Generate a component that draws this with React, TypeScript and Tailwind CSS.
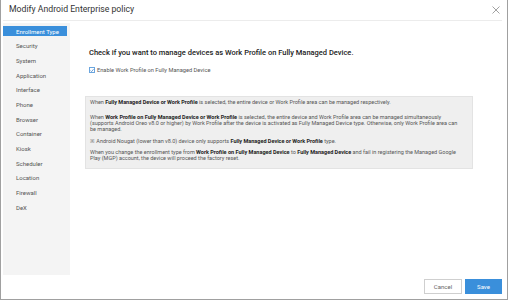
const menu = [
  "Security",
  "System",
  "Application",
  "Interface",
  "Phone",
  "Browser",
  "Container",
  "Kiosk",
  "Scheduler",
  "Location",
  "Firewall",
  "DeX",
];

export default function App() {
  return (
    <div className="w-[509px] h-[301px] bg-white font-['Roboto',sans-serif]">
      <div className="w-[508px] h-[300px] border-l border-r border-b border-[#a0a0a0] flex flex-col">
        {/* header */}
        <div className="h-[21px] ml-[2px] mr-[5px] pl-[6px] pr-[1px] flex items-center justify-between border-b border-[#ececec]">
          <span className="text-[8.7px] text-[#333]">Modify Android Enterprise policy</span>
          <svg width="8" height="8" viewBox="0 0 8 8" className="mr-[1px]">
            <path d="M0.5 0.5 L7.5 7.5 M7.5 0.5 L0.5 7.5" stroke="#8a8a8a" strokeWidth="0.8" />
          </svg>
        </div>

        <div className="flex flex-1 pl-[2px] pt-[2px]">
          {/* sidebar */}
          <div className="w-[67px] bg-[#f4f4f4] pt-px">
            <div className="h-[14.67px] flex items-center">
              <div className="w-[64px] h-[10px] bg-[#3a8fdb] text-white text-[6px] pl-[13px] flex items-center">
                Enrollment Type
              </div>
            </div>
            {menu.map((m) => (
              <div key={m} className="h-[14.67px] flex items-center pl-[13px] text-[6px] text-[#555]">
                {m}
              </div>
            ))}
          </div>

          {/* main */}
          <div className="flex-1 pl-[15px]">
            <div className="mt-[25px] pl-[4px] text-[7.5px] leading-[10px] font-medium text-[#222]">
              Check if you want to manage devices as Work Profile on Fully Managed Device.
            </div>
            <div className="mt-[8px] pl-[4px] h-[8px] flex items-center gap-[2px]">
              <div className="w-[6px] h-[6px] border border-[#6aa5de] bg-white flex items-center justify-center">
                <svg width="5" height="5" viewBox="0 0 5 5">
                  <path d="M0.6 2.6 L2 3.9 L4.5 0.8" stroke="#3a7fc8" strokeWidth="0.9" fill="none" />
                </svg>
              </div>
              <span className="text-[5.7px] text-[#555]">Enable Work Profile on Fully Managed Device</span>
            </div>

            <div className="mt-[22px] w-[388px] h-[73px] bg-[#efefef] border border-[#e3e3e3] px-[4px] pt-[2px] text-[5.5px] leading-[6px] text-[#555] whitespace-nowrap">
              <p className="mb-[9px]">
                When <b className="text-[#222]">Fully Managed Device or Work Profile</b> is selected, the entire device or Work Profile area can be managed respectively.
              </p>
              <p className="mb-[6px]">
                When <b className="text-[#222]">Work Profile on Fully Managed Device or Work Profile</b> is selected, the entire device and Work Profile area can be managed simultaneously
                <br />
                (supports Android Oreo v8.0 or higher) by Work Profile after the device is activated as Fully Managed Device type. Otherwise, only Work Profile area can
                <br />
                be managed.
              </p>
              <p className="mb-[5px]">
                ※ Android Nougat (lower than v8.0) device only supports <b className="text-[#222]">Fully Managed Device or Work Profile</b> type.
              </p>
              <p>
                When you change the enrollment type from <b className="text-[#222]">Work Profile on Fully Managed Device</b> to <b className="text-[#222]">Fully Managed Device</b> and fail in registering the Managed Google
                <br />
                Play (MGP) account, the device will proceed the factory reset.
              </p>
            </div>
          </div>
        </div>

        {/* footer */}
        <div className="h-[24px] pt-[4px] pr-[5px] flex justify-end items-start gap-[3px]">
          <button className="w-[38px] h-[15px] border border-[#cfcfcf] bg-white text-[6px] text-[#666]">Cancel</button>
          <button className="w-[37px] h-[15px] bg-[#3a8fdb] text-[6px] text-white">Save</button>
        </div>
      </div>
    </div>
  );
}
